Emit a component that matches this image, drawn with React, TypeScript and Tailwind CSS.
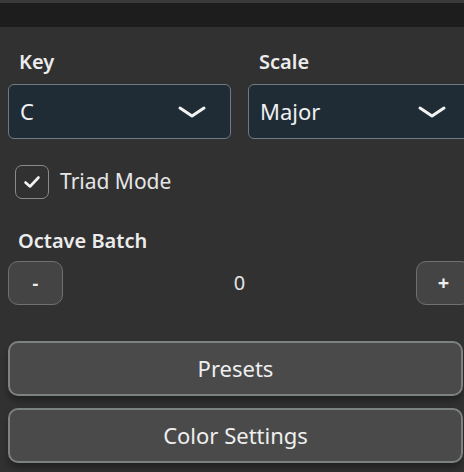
import React, { useState } from 'react';

const font = { fontFamily: '"Noto Sans", "Open Sans", sans-serif' };

const Chevron = () => (
  <svg width="30" height="14" viewBox="0 0 30 14" fill="none">
    <path d="M3 3 L15 11 L27 3" stroke="#f2f2f2" strokeWidth="3" strokeLinecap="round" strokeLinejoin="round" />
  </svg>
);

const SelectBox = ({ label, value }: { label: string; value: string }) => (
  <div className="flex flex-col">
    <span className="pl-[11px] h-6 leading-6 text-[20px] font-semibold text-[#ececec]">{label}</span>
    <div className="mt-[10px] h-[55px] flex items-center justify-between pl-[11px] pr-[23px] rounded-[6px] border-[1.5px] border-[#6e7b84] bg-[#1f2c36]">
      <span className="text-[22px] text-[#f0f0f0]">{value}</span>
      <Chevron />
    </div>
  </div>
);

export default function App() {
  const [triad, setTriad] = useState(true);
  const [octave, setOctave] = useState(0);

  return (
    <div className="w-[464px] h-[472px] overflow-hidden bg-[#313131] flex flex-col" style={font}>
      <div className="h-[3px] bg-[#3a3a3a]" />
      <div className="h-[24px] bg-[#1d1d1d]" />

      <div className="pl-2 pt-[23px] flex flex-col">
        <div className="grid grid-cols-[223px_223px] gap-x-[17px]">
          <SelectBox label="Key" value="C" />
          <SelectBox label="Scale" value="Major" />
        </div>

        <label className="mt-[26px] ml-[7px] flex items-center gap-[11px] cursor-pointer" onClick={() => setTriad(!triad)}>
          <span className="w-[34px] h-[34px] rounded-[7px] border-[1.5px] border-[#8a8a8a] flex items-center justify-center">
            {triad && (
              <svg width="18" height="14" viewBox="0 0 18 14" fill="none">
                <path d="M2.5 7.5 L7 11.5 L15.5 2.5" stroke="#f2f2f2" strokeWidth="2.6" strokeLinecap="round" strokeLinejoin="round" />
              </svg>
            )}
          </span>
          <span className="text-[21px] text-[#e6e6e6]">Triad Mode</span>
        </label>

        <span className="mt-[30px] pl-[10px] h-6 leading-6 text-[20px] font-semibold text-[#ececec]">Octave Batch</span>

        <div className="mt-2 w-[463px] flex items-center justify-between">
          <button
            className="w-[55px] h-[44px] rounded-[10px] border-[1.5px] border-[#707070] bg-[#444444] text-[#eeeeee] text-[18px] font-bold"
            onClick={() => setOctave(octave - 1)}
          >
            -
          </button>
          <span className="text-[20px] text-[#e4e4e4]">{octave}</span>
          <button
            className="w-[55px] h-[44px] rounded-[10px] border-[1.5px] border-[#707070] bg-[#444444] text-[#eeeeee] text-[20px] font-bold"
            onClick={() => setOctave(octave + 1)}
          >
            +
          </button>
        </div>

        <div className="mt-[36px] pr-[1px] flex flex-col gap-[12px]">
          <button className="h-[55px] rounded-[10px] border-2 border-[#7c8181] bg-[#4a4a4a] text-[22px] text-[#efefef] shadow-[0_5px_6px_rgba(0,0,0,0.3)]">
            Presets
          </button>
          <button className="h-[55px] rounded-[10px] border-2 border-[#7c8181] bg-[#4a4a4a] text-[22px] text-[#efefef] shadow-[0_5px_6px_rgba(0,0,0,0.3)]">
            Color Settings
          </button>
        </div>
      </div>
    </div>
  );
}
